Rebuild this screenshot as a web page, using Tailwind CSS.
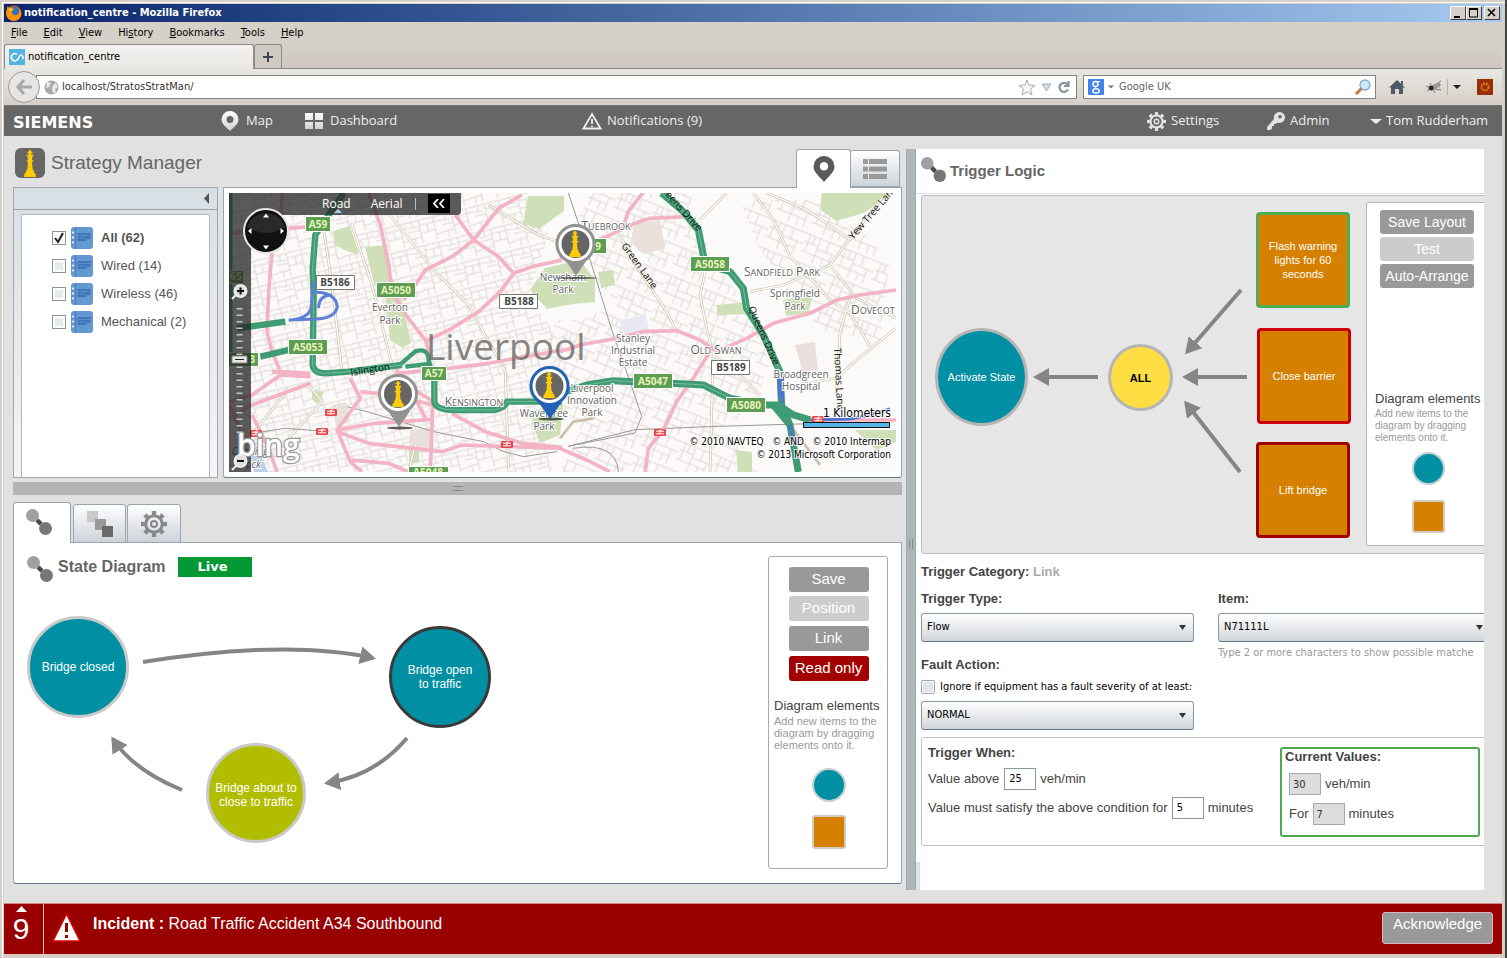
<!DOCTYPE html>
<html lang="en">
<head>
<meta charset="utf-8">
<title>notification_centre</title>
<script src="https://cdn.jsdelivr.net/npm/@tailwindcss/browser@4"></script>
</head>
<body class="font-['Liberation_Sans',sans-serif]">
<svg class="absolute size-0" aria-hidden="true">
  <defs>
    <symbol id="king" viewBox="0 0 16 28"><path d="M7 0h2v1.500h1.500v2H9.200v1.500h2.300v1.500h-.8L10 10.500h1.400v1.800H10l.8 8 1.400 1.500v1.500l1.800 1.500V28H2v-3.200l1.800-1.500v-1.500l1.400-1.500.8-8H4.600v-1.800H6L5.300 6.500h-.8V5h2.300V3.500H5.500v-2H7z" fill="#ffcb05"/></symbol>
    <symbol id="link" viewBox="0 0 26 26"><circle cx="6.500" cy="6.500" r="6.500" fill="#a0a0a0"/><circle cx="19.500" cy="19.500" r="6.500" fill="#777"/><path d="M11 11l4 4" stroke="#4a4a4a" stroke-width="4.500"/></symbol>
    <symbol id="gear" viewBox="0 0 26 26"><circle cx="13" cy="13" r="8.300" fill="none" stroke="currentColor" stroke-width="3"/><circle cx="13" cy="13" r="11" fill="none" stroke="currentColor" stroke-width="4" pathLength="16" stroke-dasharray="1 1" stroke-dashoffset=".5"/><circle cx="13" cy="13" r="3" fill="none" stroke="currentColor" stroke-width="2"/></symbol>
    <symbol id="book" viewBox="0 0 22 22"><rect width="22" height="22" rx="3" fill="#6498d2"/><path d="M4.500 0v22" stroke="#4a7cb8"/><path d="M6.500 6h13v6h-4v2h-9z" fill="#4174b8"/><path d="M7 8.500h12M7 11h8" stroke="#5c8fcb"/><path d="M2 5.500h.01M2 10.500h.01M2 15.500h.01" stroke="#fff" stroke-width="2" stroke-linecap="round"/></symbol>
    <symbol id="rail" viewBox="0 0 12 7"><rect width="12" height="7" rx="1" fill="#e8474c"/><path d="M2 2.200h8M2 4.800h8M4.500 2.200l3-1.500M4.500 4.800l3-2.600" stroke="#fff" stroke-width="1"/></symbol>
    <marker id="arrow" viewBox="0 0 16 18" refX="13" refY="9" markerWidth="16" markerHeight="18" markerUnits="userSpaceOnUse" orient="auto"><path d="M0 0l16 9L0 18z" fill="#858585"/></marker>
    <pattern id="streetsA" width="34" height="26" patternUnits="userSpaceOnUse" patternTransform="rotate(-14)"><path d="M0 3h34M0 9h10M12 8h22M5 3v6M12 3v23M0 13h12M12 16h15M20 8v8M27 3v23M0 20h12M5 20v6M27 21h7" fill="none" stroke="#ddd6d3" stroke-width="1"/></pattern>
    <pattern id="streetsB" width="38" height="30" patternUnits="userSpaceOnUse" patternTransform="rotate(22)"><path d="M0 4h38M4 4v18M9 4v8M15 4v26M0 12h15M15 15h23M24 4v11M31 15v15M0 22h31M24 22v8" fill="none" stroke="#ddd6d3" stroke-width="1"/></pattern>
    <linearGradient id="navIcon" x2="0" y2="1"><stop stop-color="#fff"/><stop offset="1" stop-color="#d0d0d0"/></linearGradient>
  </defs>
</svg>

<div class="flex min-h-screen flex-col border-r-2 border-b border-[#404040] bg-[#d6d0c8] pt-1 pr-[3px] pb-1 pl-1 shadow-[inset_2px_2px_0_#d6d0c8,inset_3px_3px_0_#fff]">

  <!-- Window chrome -->
  <header class="font-['DejaVu_Sans_Condensed','DejaVu_Sans',sans-serif] text-[11px] text-black">
    <div class="flex h-[18px] items-center bg-linear-to-r from-[#0a246a] to-[#a6caf0] pr-[2px] pl-[2px]">
      <svg class="size-4" viewBox="0 0 16 16"><circle cx="8" cy="8" r="7.500" fill="#e66000"/><circle cx="8.500" cy="6.500" r="5" fill="#3a6fc0"/><path d="M1 3c0-1 1-2 1-2l1 2c2-1 4 0 5 2-2 0-3 1-2 3 1 3 5 3 7 0 1-2 0-4-1-5 3 2 4 5 3 8-1 3-4 5-7 5-5 0-8-4-8-8 0-2 1-4 1-5z" fill="#ff9500"/><path d="M3 4c1-1 3-1 4 1-2 0-2 1-2 3z" fill="#ffd43b"/></svg>
      <h1 class="ml-[2px] flex-1 font-bold text-white">notification_centre - Mozilla Firefox</h1>
      <button aria-label="Minimize" class="flex h-[14px] w-4 border border-white border-r-[#404040] border-b-[#404040] bg-[#d4d0c8]"><svg viewBox="0 0 14 12" class="h-3 w-[14px]"><path d="M3 9h6v2H3z"/></svg></button>
      <button aria-label="Maximize" class="flex h-[14px] w-4 border border-white border-r-[#404040] border-b-[#404040] bg-[#d4d0c8]"><svg viewBox="0 0 14 12" class="h-3 w-[14px]"><path d="M2.500 2v8h8V2z" fill="none" stroke="#000"/><path d="M2 1h9v2H2z"/></svg></button>
      <button aria-label="Close" class="ml-[2px] flex h-[14px] w-4 border border-white border-r-[#404040] border-b-[#404040] bg-[#d4d0c8]"><svg viewBox="0 0 14 12" class="h-3 w-[14px]"><path d="M3 2l7 7M10 2L3 9" stroke="#000" stroke-width="1.600"/></svg></button>
    </div>
    <nav class="flex h-[22px] items-center gap-4 bg-[#d5d0c8] pl-[7px]">
      <a href="#"><u>F</u>ile</a><a href="#"><u>E</u>dit</a><a href="#"><u>V</u>iew</a><a href="#">Hi<u>s</u>tory</a><a href="#"><u>B</u>ookmarks</a><a href="#"><u>T</u>ools</a><a href="#"><u>H</u>elp</a>
    </nav>
    <div class="flex h-[25px] items-stretch border-b border-[#8a8680] bg-linear-to-b from-[#d5d0c8] to-[#cdc7c0]">
      <div class="-mb-px flex w-[250px] items-center gap-[3px] rounded-t-[3px] border border-b-0 border-[#8e8a85] bg-linear-to-b from-[#f3f2f0] to-[#e8e7e3] pl-1">
        <svg class="size-4" viewBox="0 0 16 16"><path fill="#54b3e0" d="M0 0h16v16H0z"/><path d="M8 5.500A3.500 3.500 0 1 0 8 11c2 0 1.500-5 4-5 2 0 2.500 2.500 1.500 4" fill="none" stroke="#fff" stroke-width="1.500"/></svg>
        <span>notification_centre</span>
      </div>
      <button aria-label="New tab" class="flex w-7 items-center justify-center rounded-t-[3px] border border-b-0 border-[#8e8a85] bg-[#cfcac3]"><svg class="size-3" viewBox="0 0 12 12"><path d="M6 1v10M1 6h10" stroke="#3c4650" stroke-width="2"/></svg></button>
    </div>
    <div class="flex h-9 items-center bg-linear-to-b from-[#e8e7e3] to-[#d6cfc8] pr-[9px]">
      <button aria-label="Back" class="relative z-10 ml-1 flex size-8 shrink-0 items-center justify-center rounded-full border border-[#9b9b9b] bg-[#e7e5e2]"><svg class="size-4" viewBox="0 0 16 16"><path d="M8 1L2 8l6 7M2 8h14" fill="none" stroke="#a4a9ad" stroke-width="3"/></svg></button>
      <div class="-ml-1 flex h-6 flex-1 items-center border border-[#85827e] bg-white pr-[5px] pl-[7px]">
        <svg class="size-[15px] shrink-0" viewBox="0 0 15 15"><circle cx="7.500" cy="7.500" r="7" fill="#a9a9a9"/><path d="M3 2l4 1-2 4-3 1M9 5l3-2 2 4-3 2 1 3-3 1-1-4z" fill="#e9e9e9"/></svg>
        <input aria-label="Address" value="localhost/StratosStratMan/" class="ml-px w-0 flex-1 bg-transparent pl-[2px] text-[#333] outline-none">
        <svg class="h-4 w-[52px]" viewBox="0 0 52 16"><path d="M8 1l2 5 6 .5-4.500 3.500 1.500 6-5-3.300L3 16l1.500-6L0 6.500 6 6z" fill="#f7f7f7" stroke="#a9a9a9"/><path d="M23 5h9l-4.500 7z" fill="#d4dde4" stroke="#9aa3aa" stroke-width=".8"/><path d="M48.500 5.500A4.500 4.500 0 1 0 49 10.500M49.500 2v5H45" fill="none" stroke="#86929c" stroke-width="2.200"/></svg>
      </div>
      <div class="ml-[6px] flex h-6 w-[293px] items-center border border-[#85827e] bg-white px-1">
        <svg class="h-4 w-7" viewBox="0 0 28 16"><rect width="16" height="16" rx="1" fill="#4583ec"/><circle cx="7.500" cy="5" r="2.500" fill="none" stroke="#fff" stroke-width="1.400"/><ellipse cx="8" cy="11.800" rx="3.300" ry="2.200" fill="none" stroke="#fff" stroke-width="1.400"/><path d="M9 2.500h3M8.500 7.500L7 9" stroke="#fff"/><path d="M20 6.500h6l-3 3z" fill="#777"/></svg>
        <input aria-label="Search" value="Google UK" class="w-0 flex-1 bg-transparent pl-[3px] text-[#666] outline-none">
        <svg class="size-4" viewBox="0 0 16 16"><path d="M1 15l6-6" stroke="#c87834" stroke-width="3"/><circle cx="10" cy="6" r="5" fill="#cfeafc" stroke="#7ea5cc" stroke-width="1.300"/></svg>
      </div>
      <button aria-label="Home" class="ml-3"><svg class="h-4 w-[18px]" viewBox="0 0 18 16"><path d="M9 1l8 7.500H1zM13 2h2v4h-2z" fill="#4d5a67"/><path d="M3 8l6-5 6 5v7h-4v-5H7v5H3z" fill="#4d5a67"/></svg></button>
      <button aria-label="Firebug" class="ml-[19px]"><svg class="h-4 w-[18px]" viewBox="0 0 18 16"><ellipse cx="11" cy="7" rx="5" ry="2.500" transform="rotate(-25 11 7)" fill="#999"/><circle cx="6" cy="9" r="2.500" fill="#222"/><path d="M1 7l4 2M2 12l3-2M8 10l2 4M6 6L5 4M10 10l6 1M13 4l3-2" stroke="#777"/></svg></button>
      <button aria-label="Add-on options" class="ml-1 flex items-center gap-1 border-l border-[#b5b1ab] py-[2px] pl-[5px]"><svg class="h-3 w-2" viewBox="0 0 8 12"><path d="M0 4h8L4 8z" fill="#222"/></svg></button>
      <button aria-label="Extension" class="ml-4"><svg class="size-4" viewBox="0 0 16 16"><path fill="#962f08" d="M0 0h16v16H0z"/><circle cx="8" cy="8" r="3.500" fill="none" stroke="#e07b12" stroke-width="2" stroke-dasharray="2 .8"/></svg></button>
    </div>
  </header>

  <!-- Application bar -->
  <nav class="flex h-[31px] items-center border-t border-[#777] bg-[#666] font-['Open_Sans',sans-serif] text-[13px] text-[#eee]">
    <a href="#" class="w-[217px] pl-[9px] pt-[3px] font-['DejaVu_Sans',sans-serif] text-[16px] leading-5 font-bold text-white">SIEMENS</a>
    <a href="#" class="flex w-[84px] items-center gap-[7px]"><svg class="h-5 w-[18px]" viewBox="0 0 18 20"><path d="M9 0a8.500 8.500 0 0 1 8.500 8.500C17.500 13 13 16 9 20 5 16 .5 13 .5 8.500A8.500 8.500 0 0 1 9 0zm0 5a3.500 3.500 0 1 0 0 7 3.500 3.500 0 0 0 0-7z" fill="url(#navIcon)"/></svg>Map</a>
    <a href="#" class="flex w-[277px] items-center gap-[7px]"><svg class="h-4 w-[18px]" viewBox="0 0 18 16"><path d="M0 0h8v7H0zM10 0h8v7h-8zM0 9h8v7H0zM10 9h8v7h-8z" fill="url(#navIcon)"/></svg>Dashboard</a>
    <a href="#" class="flex items-center gap-[5px]"><svg class="h-[18px] w-5" viewBox="0 0 20 18"><path d="M10 2l8.500 14.500h-17z" fill="none" stroke="#eee" stroke-width="1.800"/><path d="M10 7v5M10 13.500v1.500" stroke="#eee" stroke-width="1.800"/></svg>Notifications (9)</a>
    <span class="flex-1"></span>
    <a href="#" class="flex w-[120px] items-center gap-[5px]"><svg class="size-[19px] text-[#e4e4e4]"><use href="#gear"/></svg>Settings</a>
    <a href="#" class="flex w-[103px] items-center gap-[5px]"><svg class="size-[18px]" viewBox="0 0 18 18"><path d="M12 0a5.500 5.500 0 0 1 1 11l-3-.3L8.500 12H7v2H5v2.500L3.500 18H0v-3l7-8A5.500 5.500 0 0 1 12 0zm1 3a1.800 1.800 0 1 0 0 3.600A1.800 1.800 0 0 0 13 3z" fill="#e2e2e2"/></svg>Admin</a>
    <a href="#" class="flex w-[132px] items-center gap-1"><svg class="h-3 w-3" viewBox="0 0 12 12"><path d="M0 4h12L6 9z" fill="#eee"/></svg>Tom Rudderham</a>
  </nav>

  <main class="flex flex-1 bg-[#e1e1e1] pr-[18px] pl-[9px]">
    <!-- Left column -->
    <div class="flex min-w-0 flex-[889] flex-col pb-[19px]">
      <div class="relative z-10 -mb-px flex h-[52px] items-end pr-[2px]">
        <div class="flex flex-1 items-center gap-[6px] self-start pt-3 pl-[2px]">
          <span class="flex size-[30px] items-center justify-center rounded-md bg-[#666]"><svg class="h-[27px] w-4"><use href="#king"/></svg></span>
          <h2 class="text-[19px] text-[#666]">Strategy Manager</h2>
        </div>
        <button aria-label="Map view" class="flex h-[39px] w-[55px] items-center justify-center rounded-t-[3px] border border-b-0 border-[#9aa4ad] bg-white"><svg class="h-[26px] w-[22px]" viewBox="0 0 22 26"><path d="M11 0a10.500 10.500 0 0 1 10.500 10.500C21.500 16 16 20 11 26 6 20 .5 16 .5 10.500A10.500 10.500 0 0 1 11 0zm0 6a4.300 4.300 0 1 0 0 8.600A4.300 4.300 0 0 0 11 6z" fill="#5a5a5a"/></svg></button>
        <button aria-label="List view" class="mb-[1px] flex h-[37px] w-[49px] items-center justify-center rounded-t-[3px] border border-l-0 border-[#9aa4ad] bg-linear-to-b from-white to-[#ccd3da]"><svg class="h-5 w-6" viewBox="0 0 24 20"><path d="M0 0h5v5H0zM6 0h18v5H6zM0 7.500h5v5H0zM6 7.500h18v5H6zM0 15h5v5H0zM6 15h18v5H6z" fill="#999"/></svg></button>
      </div>

      <div class="flex h-[291px] gap-[5px]">
        <aside class="flex w-[205px] shrink-0 flex-col border border-[#a3a7ab] bg-linear-to-b from-[#d8dfe4] to-[#f4f5f6]">
          <div class="flex h-[22px] items-center justify-end border-b border-[#9aa0a5] pr-2"><button aria-label="Collapse panel"><svg class="h-[11px] w-[5px]" viewBox="0 0 5 11"><path d="M5 0v11L0 5.500z" fill="#555"/></svg></button></div>
          <ul class="mx-[7px] mt-1 flex-1 rounded-t-[2px] border border-b-0 border-[#b5b8ba] bg-white pt-[9px] pl-[30px] text-[13px] text-[#555]">
            <li><label class="flex h-7 items-center"><input type="checkbox" checked class="size-[14px] appearance-none border border-[#8a95a0] bg-[#f4f6f8] shadow-[inset_0_0_0_2px_#fff]"><svg class="-ml-[14px] size-[14px]" viewBox="0 0 14 14"><path d="M3 7l3 4 5-9" fill="none" stroke="#222" stroke-width="2"/></svg><svg class="ml-[5px] size-[22px]"><use href="#book"/></svg><b class="ml-2">All (62)</b></label></li>
            <li><label class="flex h-7 items-center"><input type="checkbox" class="size-[14px] appearance-none border border-[#8a95a0] bg-[#e6ebef] shadow-[inset_0_0_0_2px_#fff]"><svg class="ml-[5px] size-[22px]"><use href="#book"/></svg><span class="ml-2">Wired (14)</span></label></li>
            <li><label class="flex h-7 items-center"><input type="checkbox" class="size-[14px] appearance-none border border-[#8a95a0] bg-[#e6ebef] shadow-[inset_0_0_0_2px_#fff]"><svg class="ml-[5px] size-[22px]"><use href="#book"/></svg><span class="ml-2">Wireless (46)</span></label></li>
            <li><label class="flex h-7 items-center"><input type="checkbox" class="size-[14px] appearance-none border border-[#8a95a0] bg-[#e6ebef] shadow-[inset_0_0_0_2px_#fff]"><svg class="ml-[5px] size-[22px]"><use href="#book"/></svg><span class="ml-2">Mechanical (2)</span></label></li>
          </ul>
        </aside>

        <section class="relative min-w-0 flex-1 rounded-b-[3px] border border-[#9aa4ad] border-b-[#5f7689] bg-white p-[5px]">
          <svg class="h-full w-full font-['Open_Sans',sans-serif]" viewBox="229 193 667 279" preserveAspectRatio="xMidYMid slice">
            <path fill="#fcfaf8" d="M229 193h667v280H229z"/>
            <path fill="url(#streetsA)" d="M229 193h300l20 40-20 60 25 40-20 70 20 70H229z"/>
            <path fill="url(#streetsB)" d="M590 193h100l20 60 40 60 20 50-20 50-60 30-80 20-70-70 10-60 70-30-60-50zM555 320h60l-20 40-45-5zM740 200h90l60 60-10 80-60-10-60-80zM640 420h80l40 52H560l20-40z"/>
            <!-- Parks and land use -->
            <g fill="#cfe0b8">
              <path d="M333 231l17-5 9 28-10-2-14-7zM365 247l22-2 3 30 9 12 4 20 8 36-8 5-13-8-4-40-12-17zM528 196h36v15l-25 18-16-5zM530 290l15-22 35-8 15 20v22l-22 2-26 5zM598 272l15-2 2 15-14 3zM717 305l30-3 2 12-32 1zM822 193h70l-28 20-28 8-16-12zM783 300l30-5-5 18-22 3zM533 410l30-5-3 30-20 8-8-20zM736 450l16 2v20h-14zM855 430h41v12l-20 8zM409 451h10v11l-10 2zM312 390l12 2-6 12-6-4z"/>
            </g>
            <path fill="#e9e0dc" d="M634 224l26-4 5 28-22 6-12-12zM332 405l14-3 4 20-14 5zM410 430l20-3 1 20-22 4zM795 345l20-3 3 30-14 5z"/>
            <path fill="#e8e9f2" d="M620 320l26-5 3 15-26 6z"/>
            <path fill="#bcd0ea" d="M250 455l10-2 8 19h-14z"/>
            <g transform="translate(222 185) scale(.3333)" fill="none">
              <g stroke="#c9c1ab" stroke-width="8"><path d="M300 100l30 200 30 260M390 120l60 180 60 240 15 40M480 60l120 150 50 60 90 90 110 200 10 290M800 60l150 90 60 20M580 780l-20 80M200 760l100-110-40-50M90 750l110-140"/></g>
              <g stroke="#fff" stroke-width="4"><path d="M300 100l30 200 30 260M390 120l60 180 60 240 15 40M480 60l120 150 50 60 90 90 110 200 10 290M800 60l150 90 60 20M580 780l-20 80M200 760l100-110-40-50M90 750l110-140"/></g>
              <g stroke="#999" stroke-width="3"><path d="M375 665l60 15 200 60 150 30 60 30 60 15 100-15M90 745l100-15 130 10"/></g>
              <g stroke="#f3b3c4" stroke-width="11" stroke-linejoin="round">
                <path d="M182 24l-7 76-25 100-10 120-5 120 15 60 25 60 90 5M440 24l35 96 25 120 10 80 45 75 55 70 15 50M900 30l-70 40-75 95-65 50-80 40-30 45-35 45M700 90l55 75 75 50 45 50-40 55-65 60-80 50-80 40M875 265l55-20 90-20M525 565l155-15 120-15 220-40M22 145l238-20M265 570l-115-10M265 595l-175 65-68 40M265 575l-90-5-85 60-68 20M385 580l30 60-70 95 40 95 35 31M345 735l115-20 170-12M345 740l95 35 220 25 60-20 300 10M633 640l-8 221M690 685l100 55 110 35 120 12M585 620l50 30M385 825l115 10 60 26M90 690l50 100 25 71M415 620l90 10 130 30M525 540v60M22 660l40 90 20 30M585 650l30 60"/>
              </g>
              <g stroke="#3f9b73" stroke-width="19" stroke-linejoin="round"><path d="M365 24l-45 66-40 60-8 100 3 80-3 210q3 25 38 25l70-5 160-20M637 580v70q3 25 63 25h120q30-8 35-25h165M45 430l145-20M115 515l85-20M22 24v500"/><path stroke-width="13" d="M530 543l50-44q38-12 40 25l17 60M550 545l70-8"/></g>
              <g stroke="#74bf9b" stroke-width="3"><path d="M365 24l-45 66-40 60-8 100 3 80-3 210q3 25 38 25l70-5 160-20M637 580v70q3 25 63 25h120q30-8 35-25h165"/></g>
              <g stroke="#5d80d6" stroke-width="9"><path d="M275 290l-8 80q-8 30-67 36M280 322q60 0 66 43-6 35-66 37l-60 2M290 370q0-40 40-40"/></g>
            </g>
            <g transform="translate(560 185) scale(.3333)" fill="none">
              <g stroke="#c9c1ab" stroke-width="8"><path d="M580 24l60 80 50 110 120 130 60 40 60 100M620 24l120 50 130 90 100-130M870 160l-60 80-140 60-100 20M180 150l40 80 100 150 30 60M440 240l-20 90 20 100 20 80-10 350M500 24l-80 80M810 240l80 100 120 60M870 340l-30 100-10 180M1008 430l-100 80-80 70-120 20M460 510l80 60 60 60M0 760l40-50 60-10M690 720l90 120"/></g>
              <g stroke="#fff" stroke-width="4"><path d="M580 24l60 80 50 110 120 130 60 40 60 100M620 24l120 50 130 90 100-130M870 160l-60 80-140 60-100 20M180 150l40 80 100 150 30 60M440 240l-20 90 20 100 20 80-10 350M500 24l-80 80M810 240l80 100 120 60M870 340l-30 100-10 180M1008 430l-100 80-80 70-120 20M460 510l80 60 60 60"/></g>
              <g stroke="#999" stroke-width="3"><path d="M25 24l50 150 80 260 60 170 30 90-20 50-200 40 200-50 250-10 350-10M40 790q130-20 135 71"/></g>
              <g stroke="#f3b3c4" stroke-width="11" stroke-linejoin="round"><path d="M0 220l45-30 95-35 70-35 60-20 110-5M248 24l-43 56-15 45M0 500l60-20 110-20 80-20 100-3 70 28 50 35 90-40 80-45 110-30 80-40 70-15 108-15M255 861l10-71 45-55 40-85 50-70 50-80M0 790l80 35 70 36M750 705h260"/></g>
              <g stroke="#3f9b73" stroke-width="21" stroke-linejoin="round"><path d="M0 625l80-25 80-13 60 3 160 7 50 3 80 40 110 20h35l45 30 50 15M305 24l65 56 45 55 15 75 10 30 70 20 40 50 10 60 50 80 50 110 5 100 25 60 25 141M640 660l50 60"/></g>
              <g stroke="#74bf9b" stroke-width="3"><path d="M0 625l80-25 80-13 60 3 160 7 50 3 80 40 110 20M305 24l65 56 45 55 15 75 10 30 70 20 40 50 10 60 50 80 50 110"/></g>
              <g stroke="#4f74d0" stroke-width="9"><path d="M658 570v70M668 575v80M750 705l120-3 60-12 60-18M690 720l15 60"/></g>
            </g>
            <!-- Road shields -->
            <g font-size="10" font-weight="700" text-anchor="middle">
              <g fill="#5d9e54" stroke="#fff"><path d="M305.500 216.500h25v15h-25zM376.500 282.500h39v15h-39zM288.500 339.500h39v15h-39zM421.500 366.500h25v14h-25zM690.500 256.500h39v15h-39zM633.500 373.500h39v15h-39zM726.500 397.500h39v15h-39zM408.500 466.500h40v15h-40zM590.500 238.500h16v15h-16zM225.500 270.500h18v13h-18zM225.500 352.500h33v14h-33z"/></g>
              <g fill="#e9f5b9"><text x="318" y="228">A59</text><text x="396" y="294">A5050</text><text x="308" y="351">A5053</text><text x="434" y="377">A57</text><text x="710" y="268">A5058</text><text x="653" y="385">A5047</text><text x="746" y="409">A5080</text><text x="428" y="476">A5048</text><text x="598" y="250">9</text><text x="236" y="280">65</text><text x="252" y="363">3</text></g>
              <g fill="#fff" stroke="#777"><path d="M316.500 275.500h38v14h-38zM499.500 294.500h38v14h-38zM711.500 360.500h38v14h-38z"/></g>
              <g fill="#444"><text x="335" y="286">B5186</text><text x="519" y="305">B5188</text><text x="731" y="371">B5189</text></g>
            </g>
            <!-- Place labels -->
            <g font-size="10" text-anchor="middle" fill="#5f5f5f" class="stroke-white stroke-2 [paint-order:stroke]">
              <text x="390" y="311">Everton</text><text x="390" y="324">Park</text>
              <text x="563" y="281">Newsham</text><text x="563" y="293">Park</text>
              <text x="544" y="417">Wavertree</text><text x="544" y="430">Park</text>
              <text x="633" y="342">Stanley</text><text x="633" y="354">Industrial</text><text x="633" y="366">Estate</text>
              <text x="592" y="392">Liverpool</text><text x="592" y="404">Innovation</text><text x="592" y="416">Park</text>
              <text x="795" y="297">Springfield</text><text x="795" y="310">Park</text>
              <text x="801" y="378">Broadgreen</text><text x="801" y="390">Hospital</text>
              <text x="474" y="406" font-size="12">K<tspan font-size="9">ENSINGTON</tspan></text>
              <text x="716" y="354" font-size="12">O<tspan font-size="9">LD</tspan> S<tspan font-size="9">WAN</tspan></text>
              <text x="782" y="276" font-size="12">S<tspan font-size="9">ANDFIELD</tspan> P<tspan font-size="9">ARK</tspan></text>
              <text x="606" y="230" font-size="12">T<tspan font-size="9">UEBROOK</tspan></text>
              <text x="851" y="314" font-size="12" text-anchor="start">D<tspan font-size="9">OVECOT</tspan></text>
              <text x="250" y="455" font-style="italic">Canning</text><text x="250" y="468" font-style="italic">Dock</text>
            </g>
            <text x="426" y="360" font-size="37" fill="#666" fill-opacity=".8">Liverpool</text>
            <g font-size="10" fill="#111">
              <text transform="translate(351 376) rotate(-9)">Islington</text>
              <text transform="translate(621 246) rotate(54)">Green Lane</text>
              <text transform="translate(665 195) rotate(48)">eens Drive</text>
              <text transform="translate(748 308) rotate(66)">Queens Drive</text>
              <text transform="translate(853 240) rotate(-49)">Yew Tree Lane</text>
              <text transform="translate(834 348) rotate(87)">Thomas Lane</text>
            </g>
            <use href="#rail" x="325" y="409" width="12" height="7"/><use href="#rail" x="316" y="428" width="12" height="7"/><use href="#rail" x="250" y="430" width="12" height="7"/><use href="#rail" x="501" y="441" width="12" height="7"/><use href="#rail" x="654" y="429" width="12" height="7"/><use href="#rail" x="812" y="416" width="12" height="7"/>
            <!-- Pins -->
            <g>
              <ellipse cx="400" cy="428" rx="13" ry="1.500" fill="#333" opacity=".8"/><path d="M388 411h22l-11 16z" fill="#929292"/><circle cx="398" cy="394" r="18.500" fill="#fff" stroke="#929292" stroke-width="3"/><circle cx="398" cy="394" r="14" fill="#666"/><use href="#king" x="390" y="381" width="16" height="26"/>
              <ellipse cx="577" cy="278" rx="20" ry="1" fill="#333" opacity=".7"/><path d="M566 261h20l-10 15z" fill="#929292"/><circle cx="575.500" cy="244" r="18.500" fill="#fff" stroke="#929292" stroke-width="3"/><circle cx="575.500" cy="244" r="14" fill="#666"/><use href="#king" x="567" y="231" width="16" height="26"/>
              <ellipse cx="551" cy="419" rx="13" ry="1.500" fill="#333" opacity=".8"/><path d="M539 403h22l-11 16z" fill="#2162b5"/><circle cx="549.500" cy="386" r="18.500" fill="#fff" stroke="#2162b5" stroke-width="3"/><circle cx="549.500" cy="386" r="14" fill="#666"/><use href="#king" x="541" y="372" width="16" height="26"/>
            </g>
            <!-- Map navigation overlay -->
            <path d="M229 193h232v18q0 4-4 4H251v257h-22z" fill="#222" opacity=".74"/>
            <text x="237" y="456" font-size="30" fill="#fff" stroke="#999" stroke-width="2.500" class="[paint-order:stroke]" font-weight="600">bing</text>
            <circle cx="266" cy="231" r="22" fill="#111" stroke="#e6e6e6" stroke-width="2"/><path d="M247 227a20 20 0 0 1 38 0q-19 12-38 0z" fill="#444" opacity=".5"/><path d="M266 213.500l3 4h-6zM266 249.500l3-4h-6zM248 231l3.500-3v6zM284 231l-3.500-3v6z" fill="#fff"/>
            <path d="M239.500 308v128" stroke="#bbc6cc" stroke-width="6" stroke-dasharray="1.500 5"/>
            <path d="M232 356h15v7h-15z" fill="#e7e7e7" stroke="#888"/><path d="M235 359.500h9" stroke="#222"/>
            <g stroke="#eee" stroke-width="2"><path d="M232 299l5-5M232 470l5-5"/><circle cx="240.500" cy="291" r="6" fill="#ddd"/><circle cx="240.500" cy="461" r="6" fill="#ddd"/></g><path d="M237 291h7M240.500 287.500v7M237 461h7" stroke="#111" stroke-width="2"/>
            <path d="M338 209l4 4h-8z" fill="#9fd3e6"/>
            <g font-family="DejaVu Sans Condensed" text-anchor="end" fill="#000" class="stroke-white/80 stroke-2 [paint-order:stroke]"><text x="891" y="417" font-size="12">1 Kilometers</text><text x="891" y="445" font-size="10">© 2010 NAVTEQ &#160; © AND &#160; © 2010 Intermap</text><text x="891" y="458" font-size="10">© 2013 Microsoft Corporation</text></g>
            <path d="M803.500 422.500h86v5h-86z" fill="#56b4e9" stroke="#111"/>
          </svg>
          <div class="absolute top-[5px] left-[98px] flex h-[21px] items-center font-['Open_Sans',sans-serif] text-[12px] text-white">
            <button>Road</button><button class="ml-5">Aerial</button><span class="mx-3 h-3 border-l border-[#9fc5d6]"></span>
            <button aria-label="Collapse toolbar" class="flex h-[19px] w-[22px] items-center justify-center bg-black"><svg class="h-[9px] w-3" viewBox="0 0 12 9"><path d="M5 0L1 4.500 5 9M11 0L7 4.500 11 9" fill="none" stroke="#fff" stroke-width="1.800"/></svg></button>
          </div>
        </section>
      </div>

      <div class="mt-1 flex h-[13px] items-center justify-center bg-[#b4b4b4]"><span class="h-[5px] w-[10px] border-y border-[#888]"></span></div>

      <div class="relative z-10 mt-[7px] -mb-px flex h-[41px] items-end gap-[2px]" role="tablist">
        <button role="tab" aria-label="State diagram" class="flex h-[41px] w-[58px] items-start rounded-t-[3px] border border-b-0 border-[#9aa4ad] bg-white pt-[6px] pl-3"><svg class="size-[26px]"><use href="#link"/></svg></button>
        <button role="tab" aria-label="Layers" class="flex h-[39px] w-[53px] items-center justify-center rounded-t-[3px] border border-[#9aa4ad] bg-linear-to-b from-white to-[#ccd3da]"><svg class="size-[26px]" viewBox="0 0 26 26"><path fill="#c8c8c8" d="M0 0h11v11H0z"/><path fill="#999" d="M8 8h11v11H8z"/><path fill="#6a6a6a" d="M15 15h11v11H15z"/></svg></button>
        <button role="tab" aria-label="Configuration" class="-ml-px flex h-[39px] w-[54px] items-center justify-center rounded-t-[3px] border border-[#9aa4ad] bg-linear-to-b from-white to-[#ccd3da]"><svg class="size-[26px] text-[#888]"><use href="#gear"/></svg></button>
      </div>

      <section class="relative flex flex-1 justify-between rounded-b-[3px] border border-[#9aa4ad] border-b-[#5f7689] bg-white pt-[13px] pr-[13px] pb-[14px] pl-[13px]">
        <div class="flex items-start">
          <svg class="size-[26px]"><use href="#link"/></svg>
          <h3 class="mt-px ml-[5px] text-base leading-5 font-bold text-[#666]">State Diagram</h3>
          <span class="mt-px ml-3 flex h-5 w-[74px] items-center justify-center bg-[#093] pr-1 font-['DejaVu_Sans',sans-serif] text-[13px] font-bold text-white">Live</span>
        </div>
        <div class="absolute top-0 left-0 text-center text-[12px] leading-[14px] text-white">
          <svg class="absolute top-[80px] left-[90px] h-[180px] w-[320px]" viewBox="104 624 320 180"><g fill="none" stroke="#858585" stroke-width="4"><path d="M143 663q145-23 230-4" marker-end="url(#arrow)"/><path d="M407 739q-32 38-80 45" marker-end="url(#arrow)"/><path d="M182 791q-49-20-69-51" marker-end="url(#arrow)"/></g></svg>
          <div class="absolute top-[73px] left-[13px] flex size-[102px] items-center justify-center rounded-full border-[3px] border-[#c9c9c9] bg-[#008fa3]">Bridge closed</div>
          <div class="absolute top-[83px] left-[375px] flex size-[102px] items-center justify-center rounded-full border-[3px] border-[#3a3a3a] bg-[#008fa3]">Bridge open<br>to traffic</div>
          <div class="absolute top-[200px] left-[192px] flex size-[100px] items-center justify-center rounded-full border-[3px] border-[#c9c9c9] bg-[#b2bd00] whitespace-nowrap"><span class="pt-1">Bridge about to<br>close to traffic</span></div>
        </div>
        <div class="flex w-[120px] flex-col items-center rounded-[3px] border border-[#aaa] pt-[10px] pl-px text-[15px] text-white">
          <button class="h-[25px] w-20 rounded-[3px] bg-[#999]">Save</button>
          <button class="mt-1 h-[25px] w-20 rounded-[3px] bg-[#ccc]">Position</button>
          <button class="mt-[5px] h-[25px] w-20 rounded-[3px] bg-[#999]">Link</button>
          <button class="mt-[5px] h-[25px] w-20 rounded-[3px] bg-[#a30000]">Read only</button>
          <div class="mt-4 w-full pl-1 text-[#444]"><h4 class="text-[13px] leading-[18px] whitespace-nowrap">Diagram elements</h4><p class="text-[11px] leading-3 text-[#999]">Add new items to the diagram by dragging elements onto it.</p></div>
          <span class="mt-[17px] size-[34px] rounded-full border-2 border-[#c4d0d4] bg-[#008fa3]"></span>
          <span class="mt-[13px] size-[34px] rounded-[3px] border-2 border-[#d3cbc0] bg-[#d68000]"></span>
        </div>
      </section>
    </div>

    <div class="mt-[13px] mb-[13px] ml-1 flex w-[10px] shrink-0 items-center justify-center border-x border-[#7cb5c4] bg-[#b4b4b4] pt-12"><span class="h-[10px] w-1 border-x border-[#888]"></span></div>

    <!-- Trigger editor -->
    <section class="mt-[13px] mb-[13px] min-w-0 flex-[568] overflow-hidden bg-white">
      <div class="flex h-[45px] items-start border-b border-[#ddd] pt-2 pl-[5px]"><svg class="size-[25px]"><use href="#link"/></svg><h3 class="mt-1 ml-1 text-[15px] leading-5 font-bold text-[#666]">Trigger Logic</h3></div>
      <div class="relative mt-px ml-[5px] flex h-[359px] w-[580px] justify-end rounded-[3px] border border-[#b9bdc0] bg-[#e6e6e6] pt-[6px] pr-[7px] pb-[7px]">
        <div class="absolute top-0 left-0 text-center text-[11px] leading-[14px] text-white">
          <svg class="absolute top-0 left-0 h-[358px] w-[440px]" viewBox="922 196 440 358"><g fill="none" stroke="#858585" stroke-width="4"><path d="M1098 377h-62" marker-end="url(#arrow)"/><path d="M1247 377h-62" marker-end="url(#arrow)"/><path d="M1241 290l-54 62" marker-end="url(#arrow)"/><path d="M1240 472l-54-69" marker-end="url(#arrow)"/></g></svg>
          <div class="absolute top-[132px] left-[13px] flex h-[98px] w-[93px] items-center justify-center rounded-[50%] border-[3px] border-[#b5b5b5] bg-[#008fa3] whitespace-nowrap">Activate State</div>
          <div class="absolute top-[148px] left-[186px] flex h-[67px] w-[65px] items-center justify-center rounded-[50%] border-[3px] border-[#b5b5b5] bg-[#ffde43] font-bold text-black">ALL</div>
          <div class="absolute top-[16px] left-[334px] flex h-24 w-[94px] items-center justify-center rounded-[4px] border-[3px] border-[#4fab50] bg-[#d68000] px-2">Flash warning lights for 60 seconds</div>
          <div class="absolute top-[132px] left-[335px] flex h-24 w-[94px] items-center justify-center rounded-[4px] border-[3px] border-[#c80000] bg-[#d68000]">Close barrier</div>
          <div class="absolute top-[246px] left-[334px] flex h-24 w-[94px] items-center justify-center rounded-[4px] border-[3px] border-[#a00000] bg-[#d68000]">Lift bridge</div>
        </div>
        <div class="flex w-[127px] flex-col items-start rounded-[3px] border border-[#b5b5b5] bg-white pt-[7px] pl-px text-[14px] text-white">
          <button class="ml-3 h-6 w-[94px] rounded-[3px] bg-[#999]">Save Layout</button>
          <button class="mt-[3px] ml-3 h-6 w-[94px] rounded-[3px] bg-[#ccc]">Test</button>
          <button class="mt-[3px] ml-3 h-6 w-[94px] rounded-[3px] bg-[#999]">Auto-Arrange</button>
          <div class="mt-[102px] w-[116px] pl-[7px] text-[#444]"><h4 class="text-[13px] leading-[18px] whitespace-nowrap">Diagram elements</h4><p class="text-[10px] leading-3 text-[#999]">Add new items to the diagram by dragging elements onto it.</p></div>
          <span class="mt-2 ml-[44px] h-[33px] w-[33px] rounded-full border-2 border-[#c4d0d4] bg-[#008fa3]"></span>
          <span class="mt-[15px] ml-[44px] h-[33px] w-[33px] rounded-[3px] border-2 border-[#d3cbc0] bg-[#d68000]"></span>
        </div>
      </div>

      <form class="w-[640px] pl-[5px] text-[13px] text-[#444]">
        <p class="pt-2 leading-5 font-bold">Trigger Category: <span class="text-[#aaa]">Link</span></p>
        <div class="mt-[7px] flex gap-6">
          <div class="w-[273px]">
            <label for="type" class="block leading-5 font-bold">Trigger Type:</label>
            <div class="relative mt-[4px]"><select id="type" class="h-[29px] w-full appearance-none rounded-[3px] border border-[#8a98a5] border-b-[#5f7689] bg-linear-to-b from-white to-[#d0d5da] px-[5px] font-['DejaVu_Sans_Condensed','DejaVu_Sans',sans-serif] text-[11px] text-black"><option>Flow</option></select><svg class="pointer-events-none absolute top-3 right-2 h-[5px] w-[7px]" viewBox="0 0 7 5"><path d="M0 0h7L3.500 5z" fill="#333"/></svg></div>
            <label for="sev" class="mt-[13px] block leading-5 font-bold">Fault Action:</label>
            <label class="mt-1 flex h-4 items-center gap-[5px] font-['DejaVu_Sans_Condensed','DejaVu_Sans',sans-serif] text-[11px] whitespace-nowrap text-black"><input type="checkbox" class="size-[14px] shrink-0 appearance-none rounded-[2px] border border-[#9ba5ae] bg-[#dfe5ea] shadow-[inset_0_0_0_1px_#fff]">Ignore if equipment has a fault severity of at least:</label>
            <div class="relative mt-[6px]"><select id="sev" class="h-[29px] w-full appearance-none rounded-[3px] border border-[#8a98a5] border-b-[#5f7689] bg-linear-to-b from-white to-[#d0d5da] px-[5px] font-['DejaVu_Sans_Condensed','DejaVu_Sans',sans-serif] text-[11px] text-black"><option>NORMAL</option></select><svg class="pointer-events-none absolute top-3 right-2 h-[5px] w-[7px]" viewBox="0 0 7 5"><path d="M0 0h7L3.500 5z" fill="#333"/></svg></div>
          </div>
          <div class="w-[273px]">
            <label for="item" class="block leading-5 font-bold">Item:</label>
            <div class="relative mt-[4px]"><select id="item" class="h-[29px] w-full appearance-none rounded-[3px] border border-[#8a98a5] border-b-[#5f7689] bg-linear-to-b from-white to-[#d0d5da] px-[5px] font-['DejaVu_Sans_Condensed','DejaVu_Sans',sans-serif] text-[11px] text-black"><option>N71111L</option></select><svg class="pointer-events-none absolute top-3 right-2 h-[5px] w-[7px]" viewBox="0 0 7 5"><path d="M0 0h7L3.500 5z" fill="#333"/></svg></div>
            <p class="mt-[3px] font-['DejaVu_Sans_Condensed','DejaVu_Sans',sans-serif] text-[11px] whitespace-nowrap text-[#999]">Type 2 or more characters to show possible matche</p>
          </div>
        </div>
        <div class="mt-[7px] flex h-[109px] rounded-[3px] border border-[#c4bfbf] pt-[5px] pl-[6px] text-[13px]">
          <div class="w-[350px]">
            <h4 class="leading-5 font-bold">Trigger When:</h4>
            <p class="mt-1 flex h-[23px] items-center gap-1"><label for="above" class="mr-px">Value above</label><input id="above" value="25" class="h-[22px] w-8 border border-[#8a98a5] px-1 font-['DejaVu_Sans_Condensed','DejaVu_Sans',sans-serif] text-[11px] text-black">veh/min</p>
            <p class="mt-[6px] flex h-[23px] items-center gap-1 whitespace-nowrap"><label for="dur">Value must satisfy the above condition for</label><input id="dur" value="5" class="h-[22px] w-8 border border-[#8a98a5] px-1 font-['DejaVu_Sans_Condensed','DejaVu_Sans',sans-serif] text-[11px] text-black">minutes</p>
          </div>
          <div class="mt-1 ml-[2px] h-[90px] w-[200px] rounded-[3px] border-2 border-[#4fab50] pl-[3px]">
            <h4 class="leading-4 font-bold">Current Values:</h4>
            <p class="mt-2 flex h-[22px] items-center gap-1 pl-1"><input aria-label="Current flow" readonly value="30" class="h-[22px] w-8 border border-[#a0a8b0] bg-[#ddd] px-[3px] font-['DejaVu_Sans_Condensed','DejaVu_Sans',sans-serif] text-[11px] text-[#333]">veh/min</p>
            <p class="mt-2 flex h-[22px] items-center gap-1 pl-1"><label for="cur">For</label><input id="cur" readonly value="7" class="h-[22px] w-8 border border-[#a0a8b0] bg-[#ddd] px-[3px] font-['DejaVu_Sans_Condensed','DejaVu_Sans',sans-serif] text-[11px] text-[#333]">minutes</p>
          </div>
        </div>
      </form>
      <div class="mt-4 h-7 w-1 bg-[#e1e1e1]"></div>
    </section>
  </main>

  <!-- Incident bar -->
  <footer class="flex h-[51px] border-t border-[#c88] bg-[#900] pr-[9px] text-base text-white">
    <button aria-label="9 incidents" class="flex w-10 flex-col items-center border-r border-[#e0baba] pt-[2px] pr-[5px]"><svg class="h-[6px] w-[11px]" viewBox="0 0 11 6"><path d="M0 6h11L5.500 0z" fill="#fff"/></svg><span class="text-[30px] leading-[34px]">9</span></button>
    <svg class="mt-2 ml-[7px] h-[31px] w-[31px]" viewBox="0 0 31 31"><path d="M15.500 2L29 29H2z" fill="#fff" stroke="#d00" stroke-width="1.500"/><path d="M15.500 11v9M15.500 23v3" stroke="#900" stroke-width="3"/></svg>
    <p class="mt-[10px] ml-[11px] flex-1 leading-5"><b>Incident :</b> Road Traffic Accident A34 Southbound</p>
    <button class="mt-2 h-8 w-[111px] rounded-[3px] border border-[#ddb5b5] bg-[#999] pb-2 text-[15px] leading-5">Acknowledge</button>
  </footer>
</div>
</body>
</html>
